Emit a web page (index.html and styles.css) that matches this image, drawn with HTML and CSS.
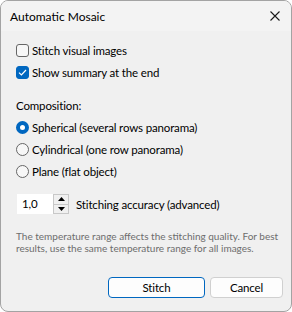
FILE: index.html
```html
<!DOCTYPE html>
<html>
<head>
<meta charset="utf-8">
<link rel="stylesheet" href="styles.css">
</head>
<body>
<div class="window">
  <div class="titlebar">
    <span class="title">Automatic Mosaic</span>
    <svg class="close" width="10" height="10" viewBox="0 0 10 10"><path d="M0.5 0.5 L9.5 9.5 M9.5 0.5 L0.5 9.5" stroke="#1a1a1a" stroke-width="1.1" fill="none"/></svg>
  </div>
  <div class="content">
    <div class="row">
      <span class="check"></span><span>Stitch visual images</span>
    </div>
    <div class="row">
      <span class="check checked"><svg width="9" height="7" viewBox="0 0 9 7"><path d="M1 3.6 L3.4 6 L8 1" stroke="#fff" stroke-width="1.2" fill="none"/></svg></span><span>Show summary at the end</span>
    </div>
    <div class="row label">Composition:</div>
    <div class="row">
      <span class="radio selected"></span><span>Spherical (several rows panorama)</span>
    </div>
    <div class="row">
      <span class="radio"></span><span>Cylindrical (one row panorama)</span>
    </div>
    <div class="row">
      <span class="radio"></span><span>Plane (flat object)</span>
    </div>
    <div class="spinrow">
      <div class="spin">
        <span class="spinvalue">1,0</span>
        <span class="spinbtns">
          <span class="sb"><svg width="7" height="4" viewBox="0 0 7 4"><path d="M0 4 L3.5 0 L7 4 Z" fill="#000"/></svg></span>
          <span class="sb"><svg width="7" height="4" viewBox="0 0 7 4"><path d="M0 0 L3.5 4 L7 0 Z" fill="#000"/></svg></span>
        </span>
      </div>
      <span>Stitching accuracy (advanced)</span>
    </div>
    <p class="help">The temperature range affects the stitching quality. For best results, use the same temperature range for all images.</p>
    <div class="buttons">
      <button class="btn primary">Stitch</button>
      <button class="btn">Cancel</button>
    </div>
  </div>
</div>
</body>
</html>
```
FILE: styles.css
```css
html, body {
  margin: 0;
  padding: 0;
  background: #ffffff;
}
body {
  font-family: Lato, "Noto Sans", sans-serif;
  font-size: 12px;
  color: #000;
}
.window {
  width: 292px;
  height: 312px;
  box-sizing: border-box;
  border: 1px solid #a3a3a3;
  border-radius: 8px;
  background: #f0f0f0;
  overflow: hidden;
  display: flex;
  flex-direction: column;
}
.titlebar {
  height: 30px;
  flex: none;
  background: #f3f3f3;
  display: flex;
  align-items: center;
  justify-content: space-between;
  padding: 0 11px 0 9px;
}
.title {
  font-size: 12px;
}
.close {
  display: block;
}
.content {
  padding: 8px 8px 0 15px;
  display: flex;
  flex-direction: column;
  font-size: 11.5px;
  letter-spacing: -0.15px;
}
.row {
  height: 22px;
  display: flex;
  align-items: center;
}
.row.label {
  margin-top: 11px;
}
.check {
  width: 13px;
  height: 13px;
  box-sizing: border-box;
  border: 1px solid #666666;
  border-radius: 3px;
  background: #f7f7f7;
  margin-right: 3px;
  display: flex;
  align-items: center;
  justify-content: center;
}
.check.checked {
  background: #0067c0;
  border-color: #0067c0;
}
.check svg {
  display: block;
}
.radio {
  width: 13px;
  height: 13px;
  box-sizing: border-box;
  border: 1px solid #666666;
  border-radius: 50%;
  background: #f7f7f7;
  margin-right: 3px;
}
.radio.selected {
  background: #ffffff;
  border: 4px solid #0067c0;
}
.spinrow {
  margin-top: 12px;
  height: 20px;
  display: flex;
  align-items: center;
}
.spin {
  width: 52px;
  height: 20px;
  box-sizing: border-box;
  background: #ffffff;
  display: flex;
  margin: 0 7px 0 1px;
}
.spinvalue {
  flex: 1;
  padding-left: 5px;
  line-height: 20px;
}
.spinbtns {
  width: 16px;
  display: flex;
  flex-direction: column;
  border: 1px solid #c8c8c8;
  box-sizing: border-box;
  background: #f0f0f0;
}
.sb {
  flex: 1;
  display: flex;
  align-items: center;
  justify-content: center;
}
.sb + .sb {
  border-top: 1px solid #c8c8c8;
}
.sb svg {
  display: block;
}
.help {
  margin: 16px 0 0 0;
  font-size: 10px;
  letter-spacing: 0;
  line-height: 12px;
  color: #6d6d6d;
}
.buttons {
  margin-top: 23px;
  display: flex;
  justify-content: flex-end;
  gap: 5px;
}
.btn {
  font-family: inherit;
  font-size: 11.5px;
  letter-spacing: -0.15px;
  height: 21px;
  box-sizing: border-box;
  border: 1px solid #d0d0d0;
  border-radius: 4px;
  background: #fdfdfd;
  color: #000;
  padding: 0;
  width: 73px;
}
.btn.primary {
  width: 97px;
  border-color: #0067c0;
}
```
